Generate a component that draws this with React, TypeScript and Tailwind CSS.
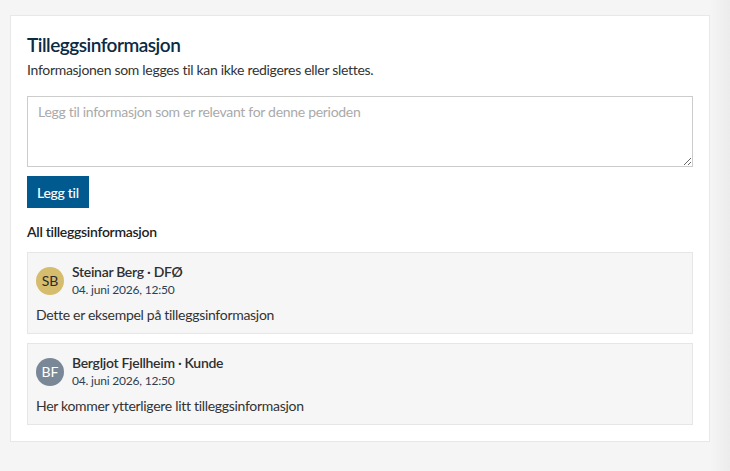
import React from "react";

interface Note {
  initials: string;
  name: string;
  org: string;
  date: string;
  text: string;
  avatar: string;
  avatarText: string;
}

const notes: Note[] = [
  {
    initials: "SB",
    name: "Steinar Berg",
    org: "DFØ",
    date: "04. juni 2026, 12:50",
    text: "Dette er eksempel på tilleggsinformasjon",
    avatar: "bg-[#d6bd6d]",
    avatarText: "text-[#2b2b2b]",
  },
  {
    initials: "BF",
    name: "Bergljot Fjellheim",
    org: "Kunde",
    date: "04. juni 2026, 12:50",
    text: "Her kommer ytterligere litt tilleggsinformasjon",
    avatar: "bg-[#7a8797]",
    avatarText: "text-white",
  },
];

function NoteCard({ note }: { note: Note }) {
  return (
    <div className="border border-[#e6e6e6] bg-[#f6f6f6] px-[8px] pt-[10px] pb-[9px]">
      <div className="flex items-center gap-[8px]">
        <div
          className={`flex h-[28px] w-[28px] items-center justify-center rounded-full text-[14px] ${note.avatar} ${note.avatarText}`}
        >
          {note.initials}
        </div>
        <div className="flex flex-col">
          <span className="text-[14px] font-semibold leading-[18px] tracking-[-0.3px] text-[#2f2f2f]">
            {note.name} · {note.org}
          </span>
          <span className="text-[12px] leading-[17px] tracking-[-0.2px] text-[#2c3e55]">{note.date}</span>
        </div>
      </div>
      <p className="mt-[8px] text-[14px] leading-[18px] tracking-[-0.3px] text-[#333]">{note.text}</p>
    </div>
  );
}

export default function App() {
  return (
    <div
      className="flex min-h-[471px] bg-[#f5f5f5]"
      style={{ fontFamily: "Lato, 'Noto Sans', sans-serif" }}
    >
      <div className="flex-1 pl-[10px] pt-[15px] pb-[30px]">
        <div className="border border-[#e8e8e8] bg-white px-[16px] pt-[17px] pb-[16px]">
          <h2 className="text-[19px] font-semibold leading-[24px] tracking-[-0.5px] text-[#0b2a44]">
            Tilleggsinformasjon
          </h2>
          <p className="mt-[4px] text-[14px] leading-[18px] tracking-[-0.3px] text-[#333]">
            Informasjonen som legges til kan ikke redigeres eller slettes.
          </p>
          <textarea
            className="mt-[17px] block h-[71px] w-full resize-y border border-[#cccccc] px-[10px] py-[6px] text-[14px] leading-[18px] tracking-[-0.3px] text-[#333] placeholder:text-[#aaaaaa] focus:outline-none"
            placeholder="Legg til informasjon som er relevant for denne perioden"
          />
          <button className="mt-[9px] h-[32px] bg-[#005a8f] px-[10px] text-[14px] font-medium tracking-[-0.3px] text-white">
            Legg til
          </button>
          <h3 className="mt-[15px] text-[14px] font-semibold leading-[18px] tracking-[-0.3px] text-[#222]">
            All tilleggsinformasjon
          </h3>
          <div className="mt-[11px] flex flex-col gap-[9px]">
            {notes.map((n) => (
              <NoteCard key={n.initials} note={n} />
            ))}
          </div>
        </div>
      </div>
      <div className="w-[20px] bg-gradient-to-r from-[#f5f5f5] to-[#ececec]" />
    </div>
  );
}
